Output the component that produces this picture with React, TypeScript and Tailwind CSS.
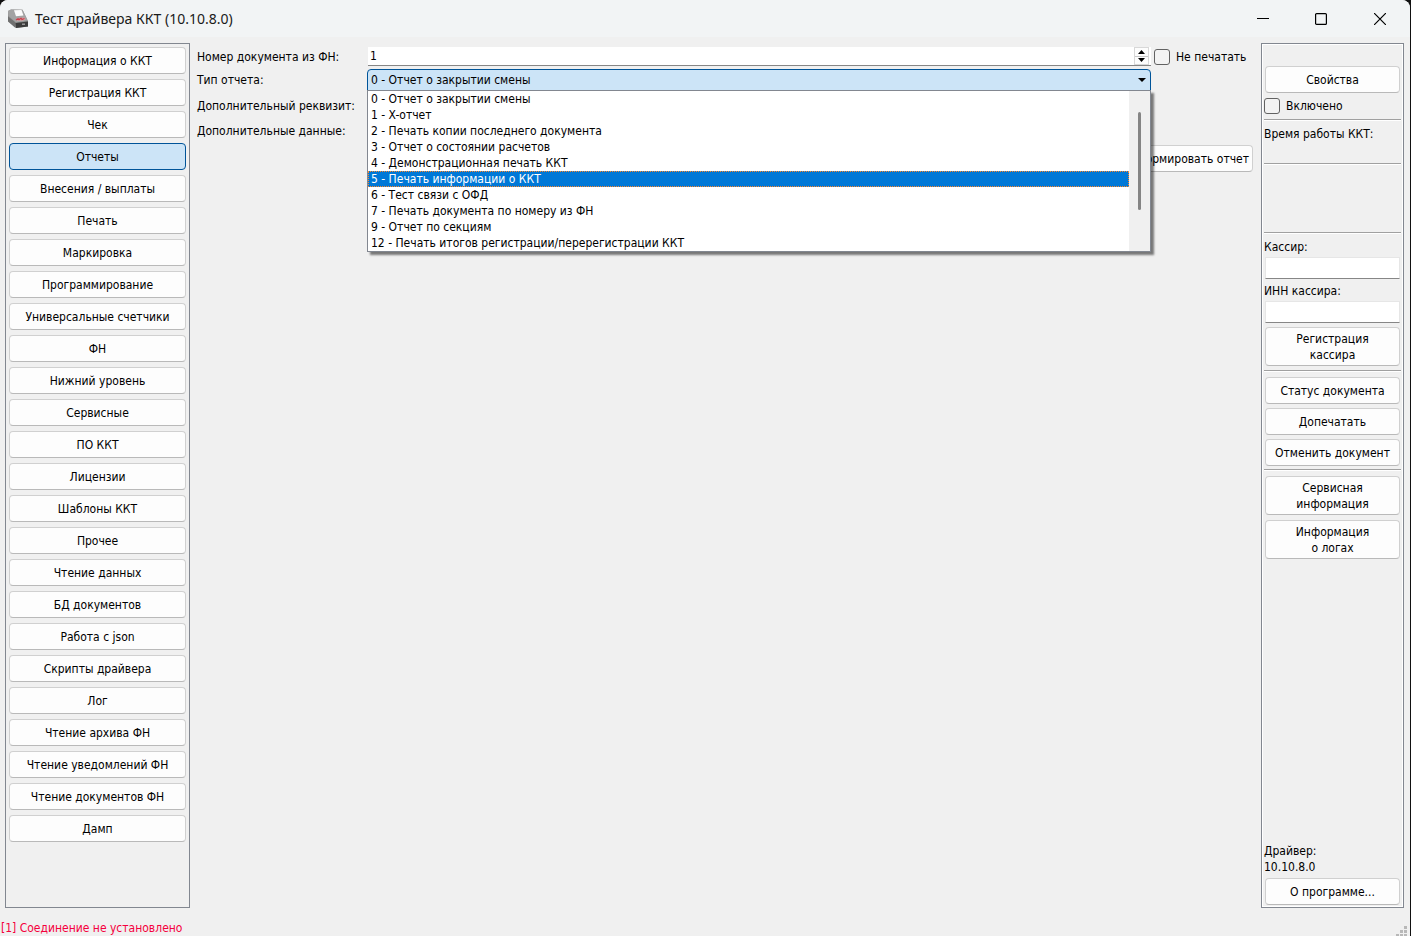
import type { ReactNode } from "react";
import clsx from "clsx";

const sections = [
  "Информация о ККТ",
  "Регистрация ККТ",
  "Чек",
  "Отчеты",
  "Внесения / выплаты",
  "Печать",
  "Маркировка",
  "Программирование",
  "Универсальные счетчики",
  "ФН",
  "Нижний уровень",
  "Сервисные",
  "ПО ККТ",
  "Лицензии",
  "Шаблоны ККТ",
  "Прочее",
  "Чтение данных",
  "БД документов",
  "Работа с json",
  "Скрипты драйвера",
  "Лог",
  "Чтение архива ФН",
  "Чтение уведомлений ФН",
  "Чтение документов ФН",
  "Дамп",
];

const reports = [
  "0 - Отчет о закрытии смены",
  "1 - X-отчет",
  "2 - Печать копии последнего документа",
  "3 - Отчет о состоянии расчетов",
  "4 - Демонстрационная печать ККТ",
  "5 - Печать информации о ККТ",
  "6 - Тест связи с ОФД",
  "7 - Печать документа по номеру из ФН",
  "9 - Отчет по секциям",
  "12 - Печать итогов регистрации/перерегистрации ККТ",
];

type ButtonProps = { children: ReactNode; active?: boolean; tall?: boolean; className?: string };

const Button = ({ children, active, tall, className }: ButtonProps) => (
  <button
    type="button"
    className={clsx(
      "shrink-0 rounded border text-center leading-4",
      tall ? "h-[39px]" : "h-[27px]",
      active
        ? "border-[#005499] bg-[#cce4f7]"
        : "border-[#d0d0d0] border-b-[#b9b9b9] bg-[#fdfdfd]",
      className,
    )}
  >
    {children}
  </button>
);

const Checkbox = ({ id, label }: { id: string; label: string }) => (
  <div className="flex items-center gap-1.5">
    <input
      id={id}
      type="checkbox"
      className="size-4 shrink-0 appearance-none rounded-[3px] border border-[#626262] bg-[#f3f3f3]"
    />
    <label htmlFor={id} className="whitespace-nowrap">
      {label}
    </label>
  </div>
);

const Divider = () => (
  <hr className="h-0.5 shrink-0 border-t border-b border-t-[#a0a0a0] border-b-white" />
);

const PrinterIcon = () => (
  <svg width="22" height="20" viewBox="0 0 22 20" aria-hidden="true">
    <path d="M1 2 4 .5 15.500 .8 21 12v5.500L9 19 1 12Z" fill="#8c8c8c" />
    <path d="M1 7.500 8.500 13.500V19L1 12.500Z" fill="#707070" />
    <path d="M4 .5 15.500 .8 20.500 11.500 9 13.500 1.500 7 1 2Z" fill="#a3a3a3" />
    <path d="M7 1.200 14.500 1 16.500 6.500 9 7.200Z" fill="#fbfbfb" />
    <path d="M9 11.500 10.500 9l7-.5 1 2-3 1.200Z" fill="#d9a0a4" />
    <path d="m9 11 2-1.200 1 .8 2-1.300 1 1.200 2.500-1" stroke="#c8404c" strokeWidth="1.300" fill="none" />
    <path d="m8.500 14 12.500-1.500V17.500L9 19Z" fill="#3c3c3c" />
    <path d="M15 14.500h3v1.500h-3Z" fill="#999" />
  </svg>
);

const TitleBar = () => (
  <header className="flex h-[37px] shrink-0 items-center justify-between bg-[#f2f4f5] pl-[7px]">
    <div className="flex items-center gap-1.5">
      <PrinterIcon />
      <h1 className="font-['Noto_Sans','Open_Sans',sans-serif] text-[14px] text-[#1a1a1a]">
        Тест драйвера ККТ (10.10.8.0)
      </h1>
    </div>
    <div className="flex items-center text-black">
      <button type="button" aria-label="Свернуть" className="grid h-9 w-[58px] place-items-center">
        <svg width="12" height="12" fill="none" stroke="currentColor">
          <path d="M0 5.500h12" />
        </svg>
      </button>
      <button type="button" aria-label="Развернуть" className="grid h-9 w-[58px] place-items-center">
        <svg width="12" height="12" fill="none" stroke="currentColor">
          <rect x=".6" y=".6" width="10.800" height="10.800" rx="1" strokeWidth="1.200" />
        </svg>
      </button>
      <button type="button" aria-label="Закрыть" className="grid h-9 w-[60px] place-items-center">
        <svg width="12" height="12" fill="none" stroke="currentColor">
          <path d="m0 0 12 12M12 0 0 12" strokeWidth="1.200" />
        </svg>
      </button>
    </div>
  </header>
);

const ReportList = () => (
  <div className="absolute inset-x-0 top-full z-10 -mt-px flex border border-[#828790] bg-white shadow-[3px_3px_2px_rgba(0,0,0,0.5)]">
    <ul role="listbox" aria-label="Тип отчета" className="min-w-0 flex-1">
      {reports.map((report, i) => (
        <li
          key={report}
          role="option"
          aria-selected={i === 5}
          className={clsx(
            "border border-dotted pl-0.5 leading-[14px] whitespace-nowrap",
            i === 5 ? "border-[#ff8728] bg-[#0078d7] text-white" : "border-transparent",
          )}
        >
          {report}
        </li>
      ))}
    </ul>
    <div className="flex w-[21px] justify-center bg-[#f0f0f0] pt-[21px] pb-[41px]">
      <div className="w-[3px] rounded-full bg-[#858585]" />
    </div>
  </div>
);

const ReportForm = () => (
  <main className="grid min-w-0 flex-1 grid-cols-[170px_minmax(0,1fr)_102px] content-start items-center pt-1 pr-2 pl-[7px]">
    <label htmlFor="number">Номер документа из ФН:</label>
    <div className="ml-px flex h-[19px] border-b border-[#868686] bg-white">
      <input id="number" type="text" defaultValue="1" className="min-w-0 flex-1 pl-0.5 outline-none" />
      <div className="mr-0.5 flex w-[15px] flex-col border border-[#d8d8d8] bg-[#fdfdfd]">
        <button type="button" aria-label="Увеличить" className="grid flex-1 place-items-center border-b border-[#c8c8c8]">
          <svg width="7" height="4">
            <path d="M0 4 3.500 0 7 4Z" />
          </svg>
        </button>
        <button type="button" aria-label="Уменьшить" className="grid flex-1 place-items-center">
          <svg width="7" height="4">
            <path d="M0 0h7L3.500 4Z" />
          </svg>
        </button>
      </div>
    </div>
    <div className="ml-[3px]">
      <Checkbox id="noprint" label="Не печатать" />
    </div>

    <label htmlFor="report" className="mt-[3px]">
      Тип отчета:
    </label>
    <div className="relative mt-[3px]">
      <select
        id="report"
        className="block h-[22px] w-full appearance-none rounded-t border border-[#005499] bg-[#cce4f7] pl-[3px] outline-none"
      >
        {reports.map((report) => (
          <option key={report}>{report}</option>
        ))}
      </select>
      <svg width="8" height="4" className="pointer-events-none absolute top-[9px] right-[5px]">
        <path d="M0 0h8L4 4Z" />
      </svg>
      <ReportList />
    </div>

    <span className="col-span-3 mt-[5px] leading-5">Дополнительный реквизит:</span>
    <span className="col-span-3 mt-[5px] leading-5">Дополнительные данные:</span>
    <Button className="col-span-3 mt-1 justify-self-end px-[3px]">Сформировать отчет</Button>
  </main>
);

const SidePanel = () => (
  <aside className="flex w-[143px] shrink-0 flex-col border border-[#828790] p-0.5 outline -outline-offset-2 outline-white">
    <Button className="mx-px mt-5">Свойства</Button>
    <div className="mt-[5px] mb-[5px]">
      <Checkbox id="enabled" label="Включено" />
    </div>
    <Divider />
    <p className="mt-[5px] mb-[21px]">Время работы ККТ:</p>
    <Divider />
    <div className="h-[67px]" />
    <Divider />
    <label htmlFor="cashier" className="mt-[5px] mb-0.5">
      Кассир:
    </label>
    <input
      id="cashier"
      type="text"
      className="mx-px h-[22px] border border-[#e6e6e6] border-b-[#868686] bg-white px-1 outline-none"
    />
    <label htmlFor="inn" className="mt-1 mb-0.5">
      ИНН кассира:
    </label>
    <input
      id="inn"
      type="text"
      className="mx-px h-[22px] border border-[#e6e6e6] border-b-[#868686] bg-white px-1 outline-none"
    />
    <Button tall className="mx-px my-1">
      Регистрация
      <br />
      кассира
    </Button>
    <Divider />
    <div className="mx-px mt-[5px] mb-[3px] flex flex-col gap-1">
      <Button>Статус документа</Button>
      <Button>Допечатать</Button>
      <Button>Отменить документ</Button>
    </div>
    <Divider />
    <div className="mx-px mt-[5px] flex flex-col gap-[5px]">
      <Button tall>
        Сервисная
        <br />
        информация
      </Button>
      <Button tall>
        Информация
        <br />
        о логах
      </Button>
    </div>
    <div className="mt-auto mb-[3px]">
      <p>Драйвер:</p>
      <p>10.10.8.0</p>
    </div>
    <Button className="mx-px">О программе...</Button>
  </aside>
);

const SizeGrip = () => (
  <svg width="11" height="10" fill="#b8b8b8" aria-hidden="true">
    <path d="M8 0h3v3H8ZM4 4h3v3H4ZM8 4h3v3H8ZM0 8h3v3H0ZM4 8h3v3H4ZM8 8h3v3H8Z" />
  </svg>
);

export default function App() {
  return (
    <div className="min-h-screen bg-[#111] pr-px">
      <div className="flex min-h-screen flex-col overflow-hidden rounded-t-lg bg-[#f0f0f0] font-['DejaVu_Sans_Condensed','Noto_Sans',sans-serif] text-[12px] leading-4 text-black">
        <TitleBar />
        <div className="flex flex-1 pt-1.5 pr-1.5 pl-[5px]">
          <div className="flex w-[185px] shrink-0 flex-col gap-[5px] border border-[#828790] p-[3px]">
            {sections.map((section) => (
              <Button key={section} active={section === "Отчеты"}>
                {section}
              </Button>
            ))}
          </div>
          <ReportForm />
          <SidePanel />
        </div>
        <footer className="flex h-7 shrink-0 items-end justify-between pr-[3px] pl-px">
          <p className="text-[#f5003d]">[1] Соединение не установлено</p>
          <SizeGrip />
        </footer>
      </div>
    </div>
  );
}
